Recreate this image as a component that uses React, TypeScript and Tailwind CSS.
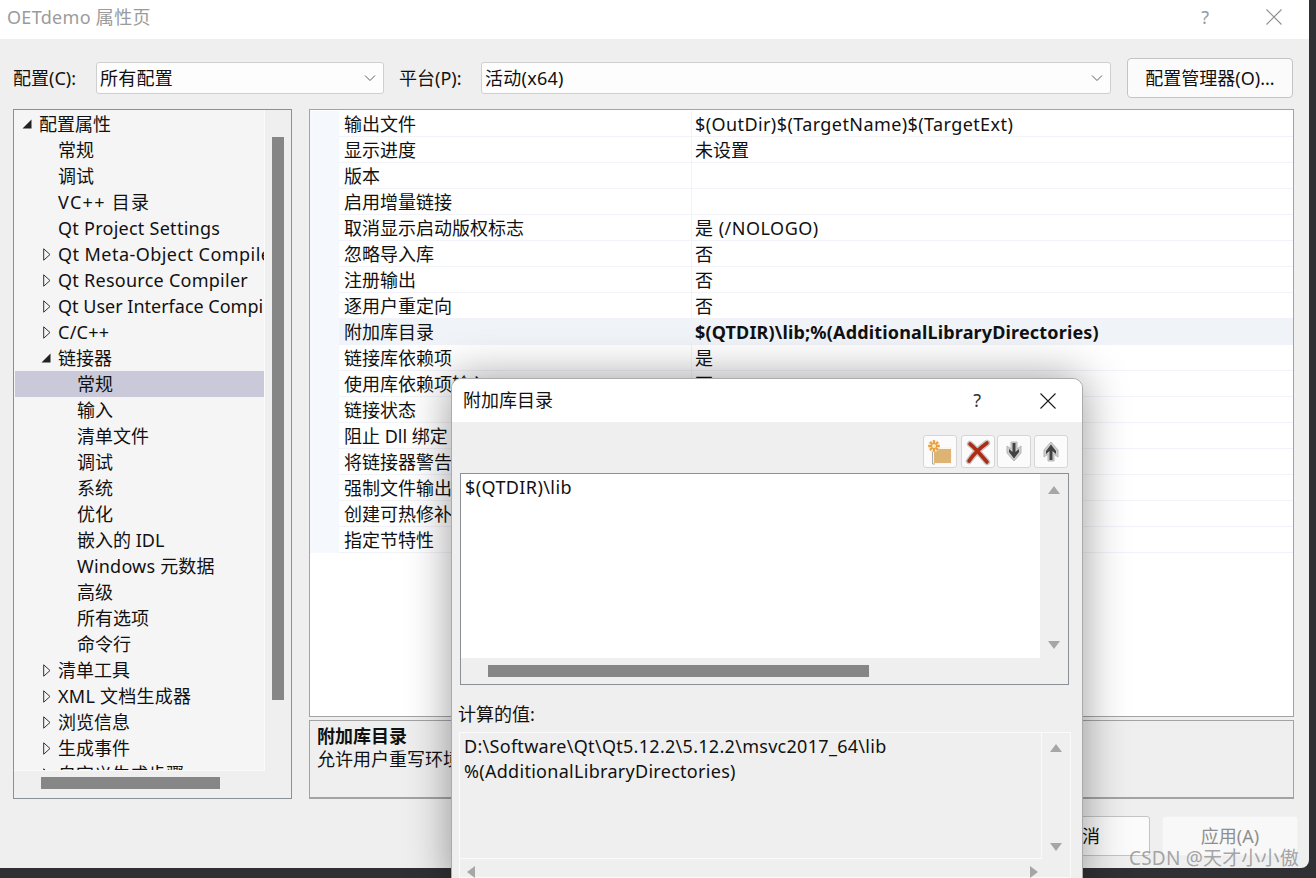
const FONT = "font-['Noto_Sans','Noto_Sans_CJK_SC',sans-serif]";

type TreeItem = { label: string; level: 0 | 1 | 2; arrow?: 'open' | 'closed'; selected?: boolean; tracking?: string };

const TREE: TreeItem[] = [
  { label: '配置属性', level: 0, arrow: 'open' },
  { label: '常规', level: 1 },
  { label: '调试', level: 1 },
  { label: 'VC++ 目录', level: 1, tracking: 'tracking-[1.3px]' },
  { label: 'Qt Project Settings', level: 1, tracking: 'tracking-[0.26px]' },
  { label: 'Qt Meta-Object Compiler', level: 1, arrow: 'closed', tracking: 'tracking-[0.45px]' },
  { label: 'Qt Resource Compiler', level: 1, arrow: 'closed', tracking: 'tracking-[0.26px]' },
  { label: 'Qt User Interface Compiler', level: 1, arrow: 'closed' },
  { label: 'C/C++', level: 1, arrow: 'closed', tracking: 'tracking-[0.26px]' },
  { label: '链接器', level: 1, arrow: 'open' },
  { label: '常规', level: 2, selected: true },
  { label: '输入', level: 2 },
  { label: '清单文件', level: 2 },
  { label: '调试', level: 2 },
  { label: '系统', level: 2 },
  { label: '优化', level: 2 },
  { label: '嵌入的 IDL', level: 2 },
  { label: 'Windows 元数据', level: 2, tracking: 'tracking-[0.2px]' },
  { label: '高级', level: 2 },
  { label: '所有选项', level: 2 },
  { label: '命令行', level: 2 },
  { label: '清单工具', level: 1, arrow: 'closed' },
  { label: 'XML 文档生成器', level: 1, arrow: 'closed', tracking: 'tracking-[0.26px]' },
  { label: '浏览信息', level: 1, arrow: 'closed' },
  { label: '生成事件', level: 1, arrow: 'closed' },
  { label: '自定义生成步骤', level: 1, arrow: 'closed' },
];

const ROWS: [string, string][] = [
  ['输出文件', '$(OutDir)$(TargetName)$(TargetExt)'],
  ['显示进度', '未设置'],
  ['版本', ''],
  ['启用增量链接', ''],
  ['取消显示启动版权标志', '是 (/NOLOGO)'],
  ['忽略导入库', '否'],
  ['注册输出', '否'],
  ['逐用户重定向', '否'],
  ['附加库目录', '$(QTDIR)\\lib;%(AdditionalLibraryDirectories)'],
  ['链接库依赖项', '是'],
  ['使用库依赖项输入', '否'],
  ['链接状态', ''],
  ['阻止 Dll 绑定', ''],
  ['将链接器警告视为错误', ''],
  ['强制文件输出', ''],
  ['创建可热修补映像', ''],
  ['指定节特性', ''],
];

function Chevron() {
  return (
    <svg width="12" height="8" viewBox="0 0 12 8" fill="none" stroke="#5f5f5f" strokeWidth="1">
      <path d="M1 1.5 L6 6.5 L11 1.5" />
    </svg>
  );
}

function CloseIcon({ color, size }: { color: string; size: number }) {
  return (
    <svg width={size} height={size} viewBox="0 0 16 16" fill="none" stroke={color} strokeWidth="1.1">
      <path d="M0.5 0.5 L15.5 15.5 M15.5 0.5 L0.5 15.5" />
    </svg>
  );
}

function Select({ value, className }: { value: string; className: string }) {
  return (
    <div className={`flex h-[32px] items-center justify-between rounded-[3px] border border-[#cfcfcf] bg-[#fdfdfd] pl-[3px] pr-[7px] ${className}`}>
      <span className="tracking-[0.25px]">{value}</span>
      <Chevron />
    </div>
  );
}

function TreeArrow({ kind }: { kind: 'open' | 'closed' }) {
  if (kind === 'open') {
    return (
      <svg width="10" height="10" viewBox="0 0 10 10">
        <path d="M9.5 0.5 V9.5 H0.5 Z" fill="#222" />
      </svg>
    );
  }
  return (
    <svg width="8" height="13" viewBox="0 0 8 13" fill="none" stroke="#333" strokeWidth="1">
      <path d="M0.7 0.8 L7 6.5 L0.7 12.2 Z" />
    </svg>
  );
}

function Tree() {
  return (
    <div className="flex h-[690px] w-[279px] flex-col border border-[#8b9096] bg-[#efefef]">
      <div className="flex min-h-0 flex-1">
        <div className="h-[661px] w-[251px] overflow-hidden whitespace-nowrap border-r border-b border-[#fafafa] bg-[#f5f5f5] pl-px pt-px">
          {TREE.map((item, i) => (
            <div
              key={i}
              className={`relative h-[26px] leading-[26px] ${item.selected ? 'bg-[#c9c9d9]' : ''} ${
                item.level === 0 ? 'pl-[24px]' : item.level === 1 ? 'pl-[43px]' : 'pl-[62px]'
              } ${item.tracking ?? ''}`}
            >
              {item.arrow && (
                <span className={`absolute top-0 flex h-[26px] items-center ${item.level === 0 ? 'left-[7px]' : item.arrow === 'open' ? 'left-[26px]' : 'left-[28px]'}`}>
                  <TreeArrow kind={item.arrow} />
                </span>
              )}
              {item.label}
            </div>
          ))}
        </div>
        <div className="flex flex-1 justify-center pt-[27px]">
          <div className="h-[563px] w-[12px] bg-[#868686]" />
        </div>
      </div>
      <div className="h-[28px] pl-[27px] pt-[7px]">
        <div className="h-[12px] w-[179px] bg-[#868686]" />
      </div>
    </div>
  );
}

function Grid() {
  return (
    <div className="h-[608px] w-[985px] overflow-hidden border border-[#a3a3a3] bg-white pt-px">
      {ROWS.map(([name, value], i) => {
        const selected = i === 8;
        return (
          <div key={i} className="flex h-[26px] leading-[27px]">
            <div className="w-[29px] shrink-0 bg-[#f5f9fe]" />
            <div className={`w-[352px] shrink-0 border-b border-[#f1f3f8] pl-[5px] ${selected ? 'bg-[#f0f4f9]' : ''}`}>{name}</div>
            <div
              className={`flex-1 border-b border-l border-[#f1f3f8] pl-[3px] ${
                selected ? 'bg-[#f0f4f9] font-bold tracking-[0.16px]' : i === 0 ? 'tracking-[0.41px]' : i === 4 ? 'tracking-[0.5px]' : ''
              }`}
            >
              {value}
            </div>
          </div>
        );
      })}
    </div>
  );
}

function FolderIcon() {
  return (
    <svg width="28" height="28" viewBox="0 0 28 28">
      <path d="M6 9 H26 V26 H6 Z" fill="#fbf5ea" />
      <path d="M8 11 H25 V25 H8 Z" fill="#deb474" />
      <path d="M6.5 11 V26 H9" stroke="#ababab" strokeWidth="1" fill="none" />
      <circle cx="8" cy="8" r="6" fill="#f7e2bd" />
      <g stroke="#e6a043" strokeWidth="2" strokeLinecap="round">
        <path d="M8 3 V13 M3 8 H13 M4.5 4.5 L11.5 11.5 M11.5 4.5 L4.5 11.5" />
      </g>
      <circle cx="8" cy="8" r="2" fill="#fbe7b8" />
    </svg>
  );
}

function DeleteIcon() {
  return (
    <svg width="28" height="28" viewBox="0 0 28 28" fill="none">
      <path d="M6 6 C10 9 17 17 23 24 M23 5 C16 10 9 17 5 23" stroke="#ffffff" strokeWidth="8.5" strokeLinecap="round" />
      <path d="M6 6 C10 9 17 17 23 24 M23 5 C16 10 9 17 5 23" stroke="#c6c6c6" strokeWidth="6.5" strokeLinecap="round" />
      <path d="M6 6 C10 9 17 17 23 24 M23 5 C16 10 9 17 5 23" stroke="#ad2c14" strokeWidth="3.6" strokeLinecap="round" />
    </svg>
  );
}

function ArrowIcon({ up }: { up?: boolean }) {
  return (
    <svg width="16" height="21" viewBox="0 0 16 21" className={up ? 'rotate-180' : ''}>
      <path d="M8 20 L1 12 V5 L5 8 V1 H11 V8 L15 5 V12 Z" fill="#cdcdcd" stroke="#b5b5b5" strokeWidth="1" />
      <path d="M6.5 2 H9.5 V11 L13 8 V11 L8 17.5 L3 11 V8 L6.5 11 Z" fill="#424242" />
    </svg>
  );
}

function ToolButton({ children, className }: { children: React.ReactNode; className: string }) {
  return (
    <div className={`flex h-[33px] w-[34px] items-center justify-center rounded-[3px] border border-[#d6d6d6] bg-[#fbfbfb] ${className}`}>
      {children}
    </div>
  );
}

function Tri({ dir }: { dir: 'up' | 'down' | 'left' | 'right' }) {
  const d = {
    up: 'M0 8 L6 0 L12 8 Z',
    down: 'M0 0 L12 0 L6 8 Z',
    left: 'M8 0 V12 L0 6 Z',
    right: 'M0 0 V12 L8 6 Z',
  }[dir];
  const horizontal = dir === 'left' || dir === 'right';
  return (
    <svg width={horizontal ? 8 : 12} height={horizontal ? 12 : 8} viewBox={horizontal ? '0 0 8 12' : '0 0 12 8'}>
      <path d={d} fill="#a6a6a6" />
    </svg>
  );
}

function VerticalArrows({ className }: { className: string }) {
  return (
    <div className={`flex w-[28px] flex-col items-center justify-between ${className}`}>
      <Tri dir="up" />
      <Tri dir="down" />
    </div>
  );
}

function Modal() {
  return (
    <div className="absolute left-[451px] top-[378px] h-[510px] w-[632px] overflow-hidden rounded-t-[10px] border border-[#ababab] bg-[#efefef] shadow-[0_0_45px_rgba(0,0,0,0.4)]">
      <div className="flex h-[43px] items-center bg-white pl-[11px]">
        <span className="flex-1">附加库目录</span>
        <span className="mr-[59px] text-[#333]">?</span>
        <span className="mr-[26px]">
          <CloseIcon color="#1a1a1a" size={16} />
        </span>
      </div>
      <div className="flex justify-end pr-[14px] pt-[13px]">
        <ToolButton className="mr-[4px]"><FolderIcon /></ToolButton>
        <ToolButton className="mr-[2px]"><DeleteIcon /></ToolButton>
        <ToolButton className="mr-[3px]"><ArrowIcon /></ToolButton>
        <ToolButton className=""><ArrowIcon up /></ToolButton>
      </div>
      <div className="ml-[8px] mt-[5px] h-[212px] w-[609px] border border-[#8b9096]">
        <div className="flex h-[184px]">
          <div className="w-[580px] bg-white pl-[4px] leading-[26px] tracking-[0.4px]">$(QTDIR)\lib</div>
          <VerticalArrows className="pb-[9px] pt-[12px]" />
        </div>
        <div className="pl-[27px] pt-[7px]">
          <div className="h-[12px] w-[381px] bg-[#868686]" />
        </div>
      </div>
      <div className="ml-[6px] mt-[16px] leading-[26px]">计算的值:</div>
      <div className="ml-[7px] mt-[5px] h-[146px] w-[612px] border border-[#fafafa]">
        <div className="flex h-[126px]">
          <div className="w-[584px] border-r border-b border-[#fafafa] pl-[4px] pt-px leading-[25px] tracking-[0.29px]">
            <div>D:\Software\Qt\Qt5.12.2\5.12.2\msvc2017_64\lib</div>
            <div>%(AdditionalLibraryDirectories)</div>
          </div>
          <VerticalArrows className="pb-[8px] pt-[11px]" />
        </div>
        <div className="flex w-[584px] justify-between pl-[7px] pr-[6px] pt-[7px]">
          <Tri dir="left" />
          <Tri dir="right" />
        </div>
      </div>
    </div>
  );
}

export default function App() {
  return (
    <div className={`relative h-[878px] w-[1316px] overflow-hidden bg-[#2f3033] text-[18px] text-[#111] ${FONT}`}>
      <div className="h-[868px] w-[1309px] overflow-hidden rounded-br-[8px] bg-[#efefef]">
        <div className="flex h-[39px] items-center justify-between bg-white pb-[5px] pl-[7px] pr-[27px] text-[#9b9b9b]">
          <span className="tracking-[0.3px]">OETdemo 属性页</span>
          <div className="flex items-center gap-[57px]">
            <span>?</span>
            <CloseIcon color="#8e8e8e" size={16} />
          </div>
        </div>

        <div className="flex h-[70px] items-center pl-[13px] pt-[8px]">
          <span className="w-[83px]">配置(C):</span>
          <Select value="所有配置" className="w-[288px]" />
          <span className="ml-[15px] w-[82px]">平台(P):</span>
          <Select value="活动(x64)" className="w-[630px]" />
          <div className="ml-[16px] flex h-[40px] w-[166px] items-center justify-center rounded-[4px] border border-[#c4c4c4] bg-[#fbfbfb]">
            配置管理器(O)...
          </div>
        </div>

        <div className="flex pl-[13px]">
          <Tree />
          <div className="ml-[17px] flex flex-col">
            <Grid />
            <div className="mt-[3px] h-[79px] w-[985px] border border-b-2 border-[#a3a3a3] bg-[#efefef] pl-[7px] leading-[23px]">
              <div className="pt-[4px] font-bold">附加库目录</div>
              <div>允许用户重写环境变量 LIB</div>
            </div>
          </div>
        </div>

        <div className="flex justify-end gap-[12px] pr-[11px] pt-[17px]">
          <div className="flex h-[40px] w-[136px] items-center justify-center rounded-[3px] border border-[#c4c4c4] bg-[#fbfbfb]">取消</div>
          <div className="flex h-[40px] w-[136px] items-center justify-center rounded-[3px] border border-[#f2f2f2] bg-[#f8f8f8] text-[#8f8f8f]">应用(A)</div>
        </div>
      </div>

      <Modal />

      <div className="absolute left-[1129px] top-[846px] text-[19px] leading-[24px] tracking-[0.2px] text-[#8f8f8f]/80">CSDN @天才小小傲</div>
    </div>
  );
}
